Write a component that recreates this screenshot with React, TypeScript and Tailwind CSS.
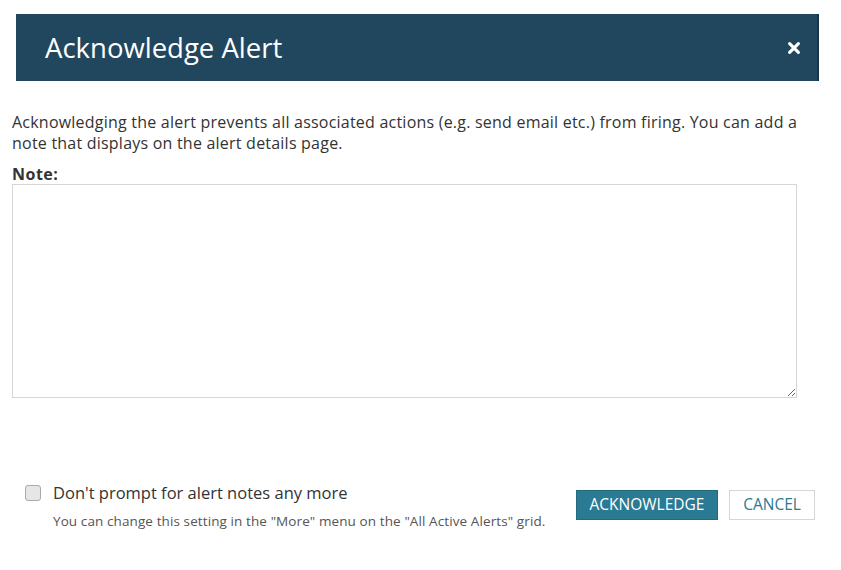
import { useState } from "react";

export default function App() {
  const [note, setNote] = useState("");
  const [dontPrompt, setDontPrompt] = useState(false);

  return (
    <div className="relative w-[841px] h-[570px] bg-white font-['Open_Sans',sans-serif] text-[#333333] overflow-hidden">
      <div className="pt-[14px] pl-[16px] pr-[22px]">
        <div className="h-[67px] bg-[#21475f] border-r-2 border-[#173649] flex items-center justify-between pl-[29px] pr-[15px]">
          <h1 className="text-[27.5px] text-white leading-none">Acknowledge Alert</h1>
          <button className="text-white w-[16px] h-[16px] flex items-center justify-center" aria-label="Close">
            <svg viewBox="0 0 16 16" className="w-[14px] h-[14px]">
              <path d="M3 3 L13 13 M13 3 L3 13" stroke="white" strokeWidth="3.6" strokeLinecap="round" />
            </svg>
          </button>
        </div>
      </div>

      <div className="pl-[12px] pr-[40px] pt-[31px]">
        <p className="text-[16px] tracking-[0.22px] leading-[21px]">
          Acknowledging the alert prevents all associated actions (e.g. send email etc.) from firing. You can add a note that displays on the alert details page.
        </p>
        <label className="block text-[16px] font-bold tracking-[0.5px] leading-[20px] mt-[10px]">Note:</label>
        <textarea
          value={note}
          onChange={(e) => setNote(e.target.value)}
          className="block w-[785px] h-[214px] border border-[#d6d6d6] outline-none p-2 text-[14px]"
        />
      </div>

      <div className="flex justify-between items-start pl-[25px] pr-[26px] mt-[85px]">
        <div>
          <label className="flex items-center gap-[12px] cursor-pointer">
            <input
              type="checkbox"
              checked={dontPrompt}
              onChange={(e) => setDontPrompt(e.target.checked)}
              className="w-[16px] h-[16px] appearance-none rounded-[3px] border border-[#a9a9a9] bg-[#e6e6e6] checked:bg-[#2a7a93]"
            />
            <span className="text-[16.5px] leading-[20px]">Don't prompt for alert notes any more</span>
          </label>
          <p className="text-[13.5px] tracking-[0.1px] text-[#555555] ml-[28px] mt-[8px]">
            You can change this setting in the "More" menu on the "All Active Alerts" grid.
          </p>
        </div>
        <div className="flex gap-[11px] mt-[7px]">
          <button className="h-[30px] w-[142px] bg-[#2a7a93] border border-[#236a80] text-white text-[15.5px]">ACKNOWLEDGE</button>
          <button className="h-[30px] w-[86px] bg-white border border-[#d6d6d6] text-[#2a7a93] text-[15.5px]">CANCEL</button>
        </div>
      </div>
    </div>
  );
}
